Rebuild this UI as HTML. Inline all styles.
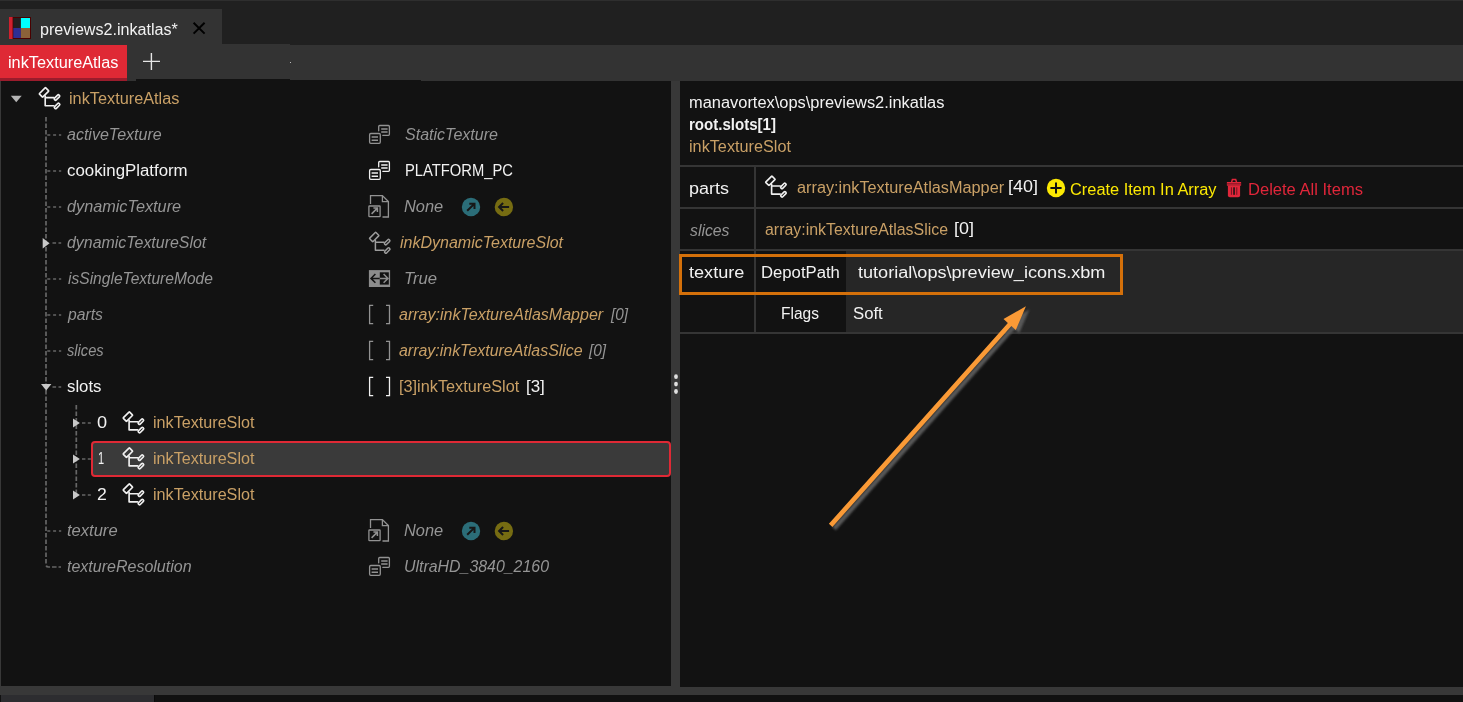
<!DOCTYPE html>
<html lang="en">
<head>
<meta charset="utf-8">
<title>previews2.inkatlas</title>
<style>
html,body{margin:0;padding:0;}
body{width:1463px;height:702px;overflow:hidden;background:#121212;position:relative;font-family:"Liberation Sans",sans-serif;font-size:16px;}
#app{position:absolute;left:0;top:0;width:1463px;height:702px;overflow:hidden;background:#121212;}
.r{position:absolute;}
.t{position:absolute;white-space:pre;line-height:20px;height:20px;transform-origin:0 50%;font-size:16px;}
svg{position:absolute;left:0;top:0;}
</style>
</head>
<body>
<div id="app">
<!-- top chrome -->
<div class="r" style="left:0;top:0;width:1463px;height:45px;background:#202020"></div>
<div class="r" style="left:0;top:0;width:1463px;height:1px;background:#2e2e2e"></div>
<div class="r" style="left:0;top:9px;width:222px;height:36px;background:#333333"></div>
<!-- toolbar -->
<div class="r" style="left:0;top:44px;width:290px;height:35px;background:#333333"></div>
<div class="r" style="left:290px;top:45px;width:131px;height:35px;background:#333333"></div>
<div class="r" style="left:421px;top:45px;width:1042px;height:36px;background:#333333"></div>
<div class="r" style="left:127px;top:78px;width:9px;height:3px;background:#333333"></div>
<div class="r" style="left:290px;top:62px;width:1px;height:1px;background:#bbbbbb"></div>
<!-- red tab -->
<div class="r" style="left:0;top:45px;width:127px;height:33px;background:#df2935"></div>
<div class="r" style="left:0;top:78px;width:127px;height:3px;background:#9b1c2c"></div>
<!-- panels -->
<div class="r" style="left:0;top:81px;width:1px;height:605px;background:#383838"></div>
<div class="r" style="left:671px;top:81px;width:9px;height:614px;background:#383838"></div>
<div class="r" style="left:0;top:686px;width:671px;height:9px;background:#383838"></div>
<div class="r" style="left:680px;top:687px;width:783px;height:8px;background:#383838"></div>
<div class="r" style="left:0;top:695px;width:1463px;height:7px;background:#111111"></div>
<div class="r" style="left:1px;top:695px;width:153px;height:7px;background:#2d2d30"></div>
<!-- selected row -->
<div class="r" style="left:91.2px;top:441.2px;width:575.8px;height:31.6px;border:2px solid #df2935;border-radius:4px;background:#3a3a3a"></div>
<!-- right panel grid -->
<div class="r" style="left:680px;top:164.5px;width:783px;height:2px;background:#353535"></div>
<div class="r" style="left:680px;top:206.5px;width:783px;height:2px;background:#353535"></div>
<div class="r" style="left:680px;top:249.2px;width:783px;height:2px;background:#353535"></div>
<div class="r" style="left:680px;top:332px;width:783px;height:2px;background:#353535"></div>
<div class="r" style="left:754px;top:166.5px;width:2px;height:165.5px;background:#353535"></div>
<div class="r" style="left:846px;top:251.2px;width:617px;height:80.8px;background:#262626"></div>
<!-- orange highlight -->
<div class="r" style="left:679px;top:254px;width:437.5px;height:35px;border:3px solid #d4700a;"></div>
<svg width="1463" height="702" viewBox="0 0 1463 702">
<defs>
<g id="cls" fill="none" stroke-linejoin="round" stroke-linecap="round">
  <rect x="-4.45" y="-2.4" width="8.9" height="4.8" rx="0.5" transform="translate(14.0,10.4) rotate(-45)"/>
  <path d="M15.2 14 V23.7 H23.8 M15.2 15.55 H23.8"/>
  <rect x="-3.2" y="-1.25" width="6.4" height="2.5" rx="1.0" transform="translate(26.95,15.5) rotate(-45)"/>
  <rect x="-3.2" y="-1.25" width="6.4" height="2.5" rx="1.0" transform="translate(27.05,23.9) rotate(-45)"/>
</g>
<g id="enum" fill="none" stroke-width="1.3" stroke-linejoin="round" stroke-linecap="round">
  <path d="M18.7 12.8 V8.5 Q18.7 7.5 19.7 7.5 H28.4 Q29.4 7.5 29.4 8.5 V16.3 Q29.4 17.3 28.4 17.3 H22.8"/>
  <path d="M21.2 10.9 H27.6 M21.2 14.1 H27.6" stroke-width="1.5" stroke-linecap="butt"/>
  <rect x="9.6" y="15.5" width="10.7" height="9.8" rx="1.2"/>
  <path d="M11.6 19 H18 M11.6 22.3 H18" stroke-width="1.5" stroke-linecap="butt"/>
</g>
<g id="file" fill="none" stroke-width="1.3" stroke-linejoin="miter" stroke-linecap="butt">
  <path d="M10.5 14 V5.6 H22.4 L28.4 11.6 V27 H22.5 M22.4 5.6 V11.6 H28.4"/>
  <rect x="8.9" y="16" width="11.2" height="10.6" rx="0.6"/>
  <path d="M11.6 23.9 L17.4 18.1 M13.4 18.1 H17.4 V22.1" stroke-width="1.5"/>
</g>
<g id="brk" fill="none" stroke-width="1.3" stroke-linejoin="miter">
  <path d="M13.2 7.4 H9.6 V25.6 H13.2 M26 7.4 H29.5 V25.6 H26"/>
</g>
<g id="bool">
  <rect x="8.9" y="8.1" width="21.2" height="16.9" fill="#8c8c8c"/>
  <rect x="19.8" y="10.3" width="9" height="12.3" fill="#121212"/>
  <path d="M19.8 16.4 H11.2 M15.4 12 L11 16.4 L15.4 20.8" fill="none" stroke="#121212" stroke-width="1.5"/>
  <path d="M19.8 16.4 H27.8 M23.6 12 L28 16.4 L23.6 20.8" fill="none" stroke="#8c8c8c" stroke-width="1.5"/>
</g>
<g id="go">
  <circle cx="0" cy="0" r="9.2" fill="#2b6d78"/>
  <path d="M-3.8 3.8 L3.3 -3.1 M-1.7 -3.3 H3.5 V1.9" fill="none" stroke="#171717" stroke-width="2"/>
</g>
<g id="back">
  <circle cx="0" cy="0" r="9.2" fill="#766c12"/>
  <path d="M5.2 0 H-4.6 M-0.8 -4 L-4.8 0 L-0.8 4" fill="none" stroke="#171717" stroke-width="2"/>
</g>
</defs>
<path d="M46 117 V564.5 Q46 567 48.5 567 H61" fill="none" stroke="#666666" stroke-width="1.7" stroke-dasharray="4.5 2"/>
<path d="M47.3 135.0 H61.2" fill="none" stroke="#666666" stroke-width="1.7" stroke-dasharray="3 2.8"/>
<path d="M47.3 171.0 H61.2" fill="none" stroke="#666666" stroke-width="1.7" stroke-dasharray="3 2.8"/>
<path d="M47.3 207.0 H61.2" fill="none" stroke="#666666" stroke-width="1.7" stroke-dasharray="3 2.8"/>
<path d="M47.3 279.0 H61.2" fill="none" stroke="#666666" stroke-width="1.7" stroke-dasharray="3 2.8"/>
<path d="M47.3 315.0 H61.2" fill="none" stroke="#666666" stroke-width="1.7" stroke-dasharray="3 2.8"/>
<path d="M47.3 351.0 H61.2" fill="none" stroke="#666666" stroke-width="1.7" stroke-dasharray="3 2.8"/>
<path d="M47.3 531.0 H61.2" fill="none" stroke="#666666" stroke-width="1.7" stroke-dasharray="3 2.8"/>
<path d="M52.5 243.0 H61.2" fill="none" stroke="#666666" stroke-width="1.7" stroke-dasharray="3.6 2.4"/>
<path d="M52.5 387.0 H61.2" fill="none" stroke="#666666" stroke-width="1.7" stroke-dasharray="3.6 2.4"/>
<path d="M76.3 405 V494" fill="none" stroke="#666666" stroke-width="1.7" stroke-dasharray="4.5 2"/>
<path d="M82 423.0 H90.8" fill="none" stroke="#666666" stroke-width="1.7" stroke-dasharray="3.4 2.4"/>
<path d="M82 459.0 H90.8" fill="none" stroke="#666666" stroke-width="1.7" stroke-dasharray="3.4 2.4"/>
<path d="M82 495.0 H90.8" fill="none" stroke="#666666" stroke-width="1.7" stroke-dasharray="3.4 2.4"/>
<path d="M10.8 95.8 H21.7 L16.25 102.3 Z" fill="#b4b4b4"/>
<path d="M42.7 237.9 V248.5 L49.6 243.2 Z" fill="#c8c8c8"/>
<path d="M41 384 H51.4 L46.2 390.4 Z" fill="#c8c8c8"/>
<path d="M73 418.4 V427.6 L79.9 423.0 Z" fill="#c8c8c8"/>
<path d="M73 454.4 V463.6 L79.9 459.0 Z" fill="#c8c8c8"/>
<path d="M73 490.4 V499.6 L79.9 495.0 Z" fill="#c8c8c8"/>
<use href="#cls" x="30" y="82" stroke="#f0f0f0" stroke-width="1.65"/>
<use href="#enum" x="360" y="118.0" stroke="#929292"/>
<use href="#enum" x="360" y="154.0" stroke="#f0f0f0"/>
<use href="#file" x="360" y="190.0" stroke="#929292"/>
<use href="#go" x="471" y="207.0"/>
<use href="#back" x="503.9" y="207.0"/>
<use href="#cls" x="360.2" y="226.6" stroke="#9c9c9c" stroke-width="1.5"/>
<use href="#bool" x="360" y="262.0"/>
<use href="#brk" x="360" y="298.0" stroke="#929292"/>
<use href="#brk" x="360" y="334.0" stroke="#929292"/>
<use href="#brk" x="360" y="370.0" stroke="#f0f0f0"/>
<use href="#cls" x="113.9" y="406.2" stroke="#f0f0f0" stroke-width="1.65"/>
<use href="#cls" x="113.9" y="442.2" stroke="#f0f0f0" stroke-width="1.65"/>
<use href="#cls" x="113.9" y="478.2" stroke="#f0f0f0" stroke-width="1.65"/>
<use href="#file" x="360" y="514.0" stroke="#929292"/>
<use href="#go" x="471" y="531.0"/>
<use href="#back" x="503.9" y="531.0"/>
<use href="#enum" x="360" y="550.0" stroke="#929292"/>
<use href="#cls" x="756.4" y="170.4" stroke="#f0f0f0" stroke-width="1.65"/>
<ellipse cx="676" cy="376.7" rx="1.9" ry="2.4" fill="#e0e0e0"/>
<ellipse cx="676" cy="384.05" rx="1.9" ry="2.4" fill="#e0e0e0"/>
<ellipse cx="676" cy="391.5" rx="1.9" ry="2.4" fill="#e0e0e0"/>
<rect x="9" y="17" width="4" height="22" fill="#d0202e"/>
<rect x="154" y="695" width="1" height="7" fill="#0a0a0a"/>
<rect x="12.6" y="17" width="18.4" height="22" fill="#4a0000"/>
<rect x="13.3" y="18" width="7.6" height="10" fill="#231f20"/>
<rect x="20.9" y="18" width="9.1" height="10" fill="#00ffff"/>
<rect x="13.3" y="28" width="7.6" height="10" fill="#2e2e94"/>
<rect x="20.9" y="28" width="9.1" height="10" fill="#8c6239"/>
<path d="M193.6 22.8 L204.6 33.6 M204.6 22.8 L193.6 33.6" stroke="#000" stroke-width="2" fill="none"/>
<path d="M143 61.4 H160 M151.4 53 V70" stroke="#e6e6e6" stroke-width="1.4" fill="none"/>
<circle cx="1056" cy="188" r="9.2" fill="#fce903"/>
<path d="M1050.4 188 H1061.6 M1056 182.4 V193.6" stroke="#121212" stroke-width="2" fill="none"/>
<path d="M1231.5 182.4 L1232.4 179.5 H1235.7 L1236.6 182.4" fill="none" stroke="#e0263a" stroke-width="1.5"/>
<rect x="1226.9" y="182" width="14.2" height="3.7" fill="#e0263a"/>
<rect x="1226.9" y="183.2" width="14.2" height="1.3" fill="#8a1827"/>
<path d="M1227.9 185.6 H1240.1 V195.2 Q1240.1 197.2 1238.1 197.2 H1229.9 Q1227.9 197.2 1227.9 195.2 Z" fill="#e0263a"/>
<rect x="1233.3" y="187.3" width="1.5" height="7.5" fill="#121212"/>
<rect x="1230.9" y="187.3" width="1.1" height="7.5" fill="#7a1422"/>
<rect x="1236.2" y="187.3" width="1.1" height="7.5" fill="#7a1422"/></svg>
<span class="t" style="left:40.29px;top:19.75px;color:#f2f2f2;transform:scaleX(1.0064)">previews2.inkatlas*</span>
<span class="t" style="left:8.08px;top:52.65px;color:#ffffff;transform:scaleX(1.0177)">inkTextureAtlas</span>
<span class="t" style="left:68.79px;top:89.15px;color:#c9a066;transform:scaleX(1.0178)">inkTextureAtlas</span>
<span class="t" style="left:67.30px;top:125.15px;color:#959595;font-style:italic;transform:scaleX(1.0010)">activeTexture</span>
<span class="t" style="left:405.20px;top:125.15px;color:#959595;font-style:italic;transform:scaleX(1.0015)">StaticTexture</span>
<span class="t" style="left:66.71px;top:161.15px;color:#f2f2f2;transform:scaleX(1.0516)">cookingPlatform</span>
<span class="t" style="left:404.68px;top:161.15px;color:#f2f2f2;transform:scaleX(0.9229)">PLATFORM_PC</span>
<span class="t" style="left:67.30px;top:197.15px;color:#959595;font-style:italic;transform:scaleX(1.0154)">dynamicTexture</span>
<span class="t" style="left:404.40px;top:197.15px;color:#959595;font-style:italic;transform:scaleX(1.0249)">None</span>
<span class="t" style="left:67.20px;top:233.15px;color:#959595;font-style:italic;transform:scaleX(0.9952)">dynamicTextureSlot</span>
<span class="t" style="left:399.50px;top:233.15px;color:#c9a066;font-style:italic;transform:scaleX(1.0001)">inkDynamicTextureSlot</span>
<span class="t" style="left:67.80px;top:269.15px;color:#959595;font-style:italic;transform:scaleX(0.9736)">isSingleTextureMode</span>
<span class="t" style="left:404.24px;top:269.15px;color:#959595;font-style:italic;transform:scaleX(1.0409)">True</span>
<span class="t" style="left:68.16px;top:305.15px;color:#959595;font-style:italic;transform:scaleX(0.9818)">parts</span>
<span class="t" style="left:398.90px;top:305.15px;color:#c9a066;font-style:italic;transform:scaleX(1.0009)">array:inkTextureAtlasMapper</span>
<span class="t" style="left:610.52px;top:305.15px;color:#959595;font-style:italic;transform:scaleX(0.9583)">[0]</span>
<span class="t" style="left:67.20px;top:341.15px;color:#959595;font-style:italic;transform:scaleX(0.9148)">slices</span>
<span class="t" style="left:398.90px;top:341.15px;color:#c9a066;font-style:italic;transform:scaleX(0.9962)">array:inkTextureAtlasSlice</span>
<span class="t" style="left:588.52px;top:341.15px;color:#959595;font-style:italic;transform:scaleX(0.9633)">[0]</span>
<span class="t" style="left:67.20px;top:377.15px;color:#f2f2f2;transform:scaleX(1.0485)">slots</span>
<span class="t" style="left:398.68px;top:377.15px;color:#c9a066;transform:scaleX(1.0167)">[3]inkTextureSlot</span>
<span class="t" style="left:525.94px;top:377.15px;color:#f2f2f2;transform:scaleX(1.0585)">[3]</span>
<span class="t" style="left:97.30px;top:413.15px;color:#f2f2f2;transform:scaleX(1.1335)">0</span>
<span class="t" style="left:152.99px;top:413.15px;color:#c9a066;transform:scaleX(1.0095)">inkTextureSlot</span>
<span class="t" style="left:97.81px;top:449.15px;color:#f2f2f2;transform:scaleX(0.6875)">1</span>
<span class="t" style="left:152.99px;top:449.15px;color:#c9a066;transform:scaleX(1.0095)">inkTextureSlot</span>
<span class="t" style="left:97.30px;top:485.15px;color:#f2f2f2;transform:scaleX(1.1012)">2</span>
<span class="t" style="left:152.99px;top:485.15px;color:#c9a066;transform:scaleX(1.0095)">inkTextureSlot</span>
<span class="t" style="left:67.20px;top:521.15px;color:#959595;font-style:italic;transform:scaleX(1.0342)">texture</span>
<span class="t" style="left:404.40px;top:521.15px;color:#959595;font-style:italic;transform:scaleX(1.0249)">None</span>
<span class="t" style="left:67.20px;top:557.15px;color:#959595;font-style:italic;transform:scaleX(1.0003)">textureResolution</span>
<span class="t" style="left:404.21px;top:557.15px;color:#959595;font-style:italic;transform:scaleX(0.9940)">UltraHD_3840_2160</span>
<span class="t" style="left:688.57px;top:93.25px;color:#f2f2f2;transform:scaleX(1.0258)">manavortex\ops\previews2.inkatlas</span>
<span class="t" style="left:688.66px;top:114.75px;color:#f2f2f2;font-weight:bold;transform:scaleX(0.9405)">root.slots[1]</span>
<span class="t" style="left:689.19px;top:137.25px;color:#c9a066;transform:scaleX(1.0147)">inkTextureSlot</span>
<span class="t" style="left:689.08px;top:178.75px;color:#f2f2f2;transform:scaleX(1.1224)">parts</span>
<span class="t" style="left:797.30px;top:177.75px;color:#c9a066;transform:scaleX(1.0171)">array:inkTextureAtlasMapper</span>
<span class="t" style="left:1007.88px;top:176.75px;color:#f2f2f2;transform:scaleX(1.1211)">[40]</span>
<span class="t" style="left:1070.30px;top:180.25px;color:#fce903;transform:scaleX(1.0234)">Create Item In Array</span>
<span class="t" style="left:1247.88px;top:180.25px;color:#e0263a;transform:scaleX(1.0340)">Delete All Items</span>
<span class="t" style="left:689.60px;top:220.95px;color:#959595;font-style:italic;transform:scaleX(0.9848)">slices</span>
<span class="t" style="left:765.30px;top:220.25px;color:#c9a066;transform:scaleX(0.9942)">array:inkTextureAtlasSlice</span>
<span class="t" style="left:953.88px;top:219.25px;color:#f2f2f2;transform:scaleX(1.1197)">[0]</span>
<span class="t" style="left:689.20px;top:262.95px;color:#f2f2f2;transform:scaleX(1.1323)">texture</span>
<span class="t" style="left:761.46px;top:262.95px;color:#f2f2f2;transform:scaleX(1.0433)">DepotPath</span>
<span class="t" style="left:857.90px;top:263.25px;color:#f2f2f2;transform:scaleX(1.1308)">tutorial\ops\preview_icons.xbm</span>
<span class="t" style="left:781.13px;top:303.75px;color:#f2f2f2;transform:scaleX(0.9679)">Flags</span>
<span class="t" style="left:853.32px;top:303.75px;color:#f2f2f2;transform:scaleX(1.0449)">Soft</span>
<svg width="1463" height="702" viewBox="0 0 1463 702"><defs><filter id="sh" x="-20%" y="-20%" width="140%" height="140%"><feGaussianBlur stdDeviation="0.9"/></filter></defs>
<path d="M1025.9 306.3 L1003.5 319.1 L1007.9 323.0 L828.9 523.8 L832.4 526.9 L1011.4 326.0 L1015.8 330.0 Z" fill="#585858" filter="url(#sh)" transform="translate(3.4,3.3)"/>
<path d="M1025.9 306.3 L1003.5 319.1 L1007.9 323.0 L828.9 523.8 L832.4 526.9 L1011.4 326.0 L1015.8 330.0 Z" fill="#fa9a36"/></svg>
</div>
</body>
</html>
